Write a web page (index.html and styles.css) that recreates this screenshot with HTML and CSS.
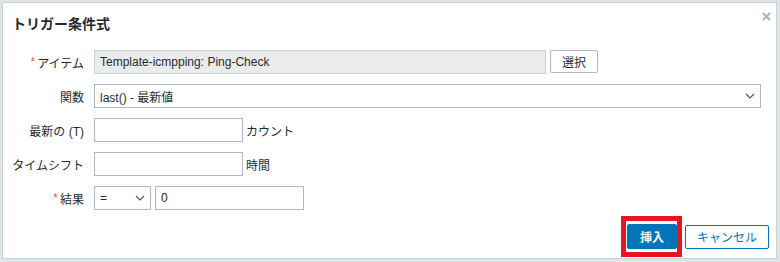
FILE: index.html
```html
<!DOCTYPE html>
<html lang="ja">
<head>
  <meta charset="UTF-8">
  <title>トリガー条件式</title>
  <link rel="stylesheet" href="styles.css">
</head>
<body>
  <div class="dialog">
    <div class="dialog-head">
      <h2>トリガー条件式</h2>
      <button class="btn-close" title="閉じる">
        <svg width="9" height="9" viewBox="0 0 9 9"><path d="M1 1L8 8M8 1L1 8" stroke="#aeb8be" stroke-width="2.2"/></svg>
      </button>
    </div>

    <div class="form">
      <label class="label"><span class="req">*</span> アイテム</label>
      <div class="field">
        <input class="input input-item" type="text" value="Template-icmpping: Ping-Check" readonly>
        <button class="btn-alt">選択</button>
      </div>

      <label class="label">関数</label>
      <div class="field">
        <div class="select select-func">
          <span>last() - 最新値</span>
          <svg width="10" height="6" viewBox="0 0 10 6"><path d="M1 1l4 4 4-4" fill="none" stroke="#4f5b62" stroke-width="1.2"/></svg>
        </div>
      </div>

      <label class="label">最新の (T)</label>
      <div class="field">
        <input class="input input-short" type="text">
        <span class="unit">カウント</span>
      </div>

      <label class="label">タイムシフト</label>
      <div class="field">
        <input class="input input-short" type="text">
        <span class="unit">時間</span>
      </div>

      <label class="label"><span class="req">*</span> 結果</label>
      <div class="field">
        <div class="select select-op">
          <span>=</span>
          <svg width="10" height="6" viewBox="0 0 10 6"><path d="M1 1l4 4 4-4" fill="none" stroke="#4f5b62" stroke-width="1.2"/></svg>
        </div>
        <input class="input input-short" type="text" value="0">
      </div>
    </div>

    <div class="dialog-foot">
      <span class="mark">
        <button class="btn-main">挿入</button>
      </span>
      <button class="btn-cancel">キャンセル</button>
    </div>
  </div>
</body>
</html>
```

FILE: styles.css
```css
body {
  margin: 0;
  padding: 2px;
  background: #dfe4e7;
  font-family: "Liberation Sans", Arial, "Noto Sans CJK JP", sans-serif;
  font-size: 12px;
  color: #1f2c33;
}

.dialog {
  position: relative;
  box-sizing: border-box;
  width: 775px;
  height: 257px;
  background: #ffffff;
  border: 1px solid #c9d1d6;
  padding: 0 7px 0 9px;
}

.dialog-head {
  height: 40px;
  display: flex;
  align-items: center;
}

.dialog-head h2 {
  margin: 0;
  font-size: 14px;
  font-weight: bold;
  font-family: "Noto Sans CJK JP", sans-serif;
}

.btn-close {
  position: absolute;
  top: 7px;
  right: 3px;
  padding: 0;
  width: 13px;
  height: 13px;
  border: none;
  background: none;
  display: flex;
  align-items: center;
  justify-content: center;
}

.form {
  margin-top: 7px;
  display: grid;
  grid-template-columns: 72px auto;
  column-gap: 10px;
  row-gap: 10px;
}

.label {
  height: 24px;
  display: flex;
  align-items: center;
  justify-content: flex-end;
  white-space: nowrap;
}

.req {
  color: #e45959;
  margin-right: 2px;
}

.field {
  height: 24px;
  display: flex;
  align-items: center;
  gap: 4px;
}

.input {
  box-sizing: border-box;
  height: 24px;
  margin: 0;
  padding: 0 5px;
  border: 1px solid #acbbc2;
  background: #ffffff;
  font: inherit;
  color: #1f2c33;
  outline: none;
}

.input-item {
  width: 452px;
  background: #ebebeb;
  border-color: #ccd3d6;
}

.input-short {
  width: 149px;
}

.unit {
  margin-left: -1px;
}

.select {
  box-sizing: border-box;
  height: 24px;
  border: 1px solid #acbbc2;
  padding: 0 5px;
  display: flex;
  align-items: center;
  justify-content: space-between;
}

.select-func {
  width: 667px;
}

.select-op {
  width: 57px;
}

button {
  font: inherit;
  cursor: pointer;
}

.btn-alt {
  box-sizing: border-box;
  width: 48px;
  height: 23px;
  margin-top: -1px;
  padding: 0;
  border: 1px solid #acbbc2;
  border-radius: 2px;
  background: #ffffff;
  color: #1f2c33;
}

.dialog-foot {
  margin-top: 6px;
  display: flex;
  justify-content: flex-end;
  align-items: center;
  gap: 3px;
}

.mark {
  display: flex;
  border: 5px solid #e8141f;
  padding: 3px 0 3px 1px;
}

.btn-main {
  box-sizing: border-box;
  width: 50px;
  height: 25px;
  padding: 0;
  border: 1px solid #0275b8;
  border-radius: 2px;
  background: #0275b8;
  color: #ffffff;
  font-weight: bold;
}

.btn-cancel {
  box-sizing: border-box;
  width: 84px;
  height: 24px;
  padding: 0;
  border: 1px solid #0275b8;
  border-radius: 2px;
  background: #ffffff;
  color: #0275b8;
}
```
